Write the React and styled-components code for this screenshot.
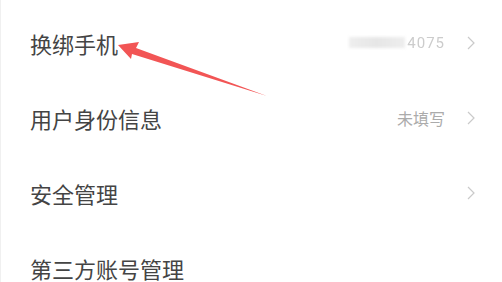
import React from "react";
import styled, { createGlobalStyle } from "styled-components";

const GlobalStyle = createGlobalStyle`
  html, body {
    margin: 0;
    padding: 0;
    background: #ffffff;
  }
  body {
    font-family: "Noto Sans CJK SC", "Noto Sans", sans-serif;
  }
`;

const rows = [
  { id: 1, label: "换绑手机", phone: "4075" },
  { id: 2, label: "用户身份信息", value: "未填写" },
  { id: 3, label: "安全管理" },
  { id: 4, label: "第三方账号管理", noArrow: true },
];

function Chevron() {
  return (
    <ChevronIcon width='8' height='14' viewBox='0 0 8 14'>
      <path d='M1 1 L7 7 L1 13' fill='none' stroke='#cacaca' strokeWidth='1.2' />
    </ChevronIcon>
  );
}

function App() {
  return (
    <>
      <GlobalStyle />
      <Page>
        <List>
          {rows.map(({ id, label, value, phone, noArrow }) => (
            <Row key={id}>
              <Label>{label}</Label>
              <Right>
                {phone && (
                  <Phone>
                    <Masked />
                    {phone}
                  </Phone>
                )}
                {value && <Value>{value}</Value>}
                {!noArrow && <Chevron />}
              </Right>
            </Row>
          ))}
        </List>
        <Annotation width='502' height='282' viewBox='0 0 502 282'>
          <polygon
            points='117,45 138,42 135,48 266,96 131,54 130,59'
            fill='#f25555'
          />
        </Annotation>
      </Page>
    </>
  );
}

const Page = styled.div`
  position: relative;
  width: 502px;
  height: 282px;
  overflow: hidden;
  background: #fff;
  border-left: 1px solid #f0f0f0;
  box-sizing: border-box;
`;

const List = styled.div`
  display: flex;
  flex-direction: column;
  padding: 5px 0 0 29px;
`;

const Row = styled.div`
  display: flex;
  align-items: center;
  justify-content: space-between;
  height: 75px;
  padding-right: 27px;
`;

const Label = styled.span`
  font-size: 22px;
  color: #444444;
`;

const Right = styled.div`
  display: flex;
  align-items: center;
  gap: 22px;
`;

const Value = styled.span`
  font-size: 16px;
  color: #ababab;
`;

const Phone = styled.span`
  display: flex;
  align-items: center;
  font-family: "Roboto", "Liberation Sans", sans-serif;
  font-size: 15px;
  color: #cccccc;
  letter-spacing: 1px;
  filter: blur(0.4px);
`;

const Masked = styled.span`
  display: inline-block;
  width: 56px;
  height: 11px;
  margin-right: 2px;
  background: linear-gradient(90deg, #eeeeee 0%, #e6e6e6 50%, #eeeeee 100%);
  filter: blur(1.5px);
`;

const ChevronIcon = styled.svg`
  display: block;
`;

const Annotation = styled.svg`
  position: absolute;
  top: 0;
  left: 0;
  pointer-events: none;
`;

export default App;
